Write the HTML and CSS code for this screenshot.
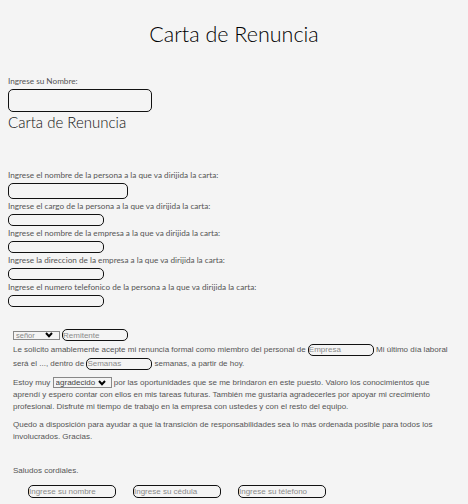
FILE: index.html
```html
<!DOCTYPE html>
<html lang="es">
<head>
<meta charset="utf-8">
<title>Carta de Renuncia</title>
<link rel="stylesheet" href="styles.css">
</head>
<body>
<h1 class="title">Carta de Renuncia</h1>
<div class="form">
  <label class="lbl">Ingrese su Nombre:</label>
  <input class="in in-name" type="text">
  <h2 class="sub">Carta de Renuncia</h2>
  <div class="fields">
    <label class="lbl">Ingrese el nombre de la persona a la que va dirijida la carta:</label>
    <input class="in in-wide" type="text">
    <label class="lbl">Ingrese el cargo de la persona a la que va dirijida la carta:</label>
    <input class="in in-mid" type="text">
    <label class="lbl">Ingrese el nombre de la empresa a la que va dirijida la carta:</label>
    <input class="in in-mid" type="text">
    <label class="lbl">Ingrese la direccion de la empresa a la que va dirijida la carta:</label>
    <input class="in in-mid" type="text">
    <label class="lbl">Ingrese el numero telefonico de la persona a la que va dirijida la carta:</label>
    <input class="in in-mid" type="text">
  </div>
</div>
<div class="letter">
  <div class="head"><span class="sel sel-sr"><select class="sel-in"><option>señor</option><option>señora</option></select><svg class="chev" width="8" height="6" viewBox="0 0 8 6"><polyline points="1,1 4,4.2 7,1" fill="none" stroke="#000" stroke-width="2"/></svg></span><input class="in in-sm" type="text" placeholder="Remitente"></div>
  <p class="txt first">Le solicito amablemente acepte mi renuncia formal como miembro del personal de <input class="in in-sm" type="text" placeholder="Empresa"> Mi último día laboral será el ..., dentro de <input class="in in-sm" type="text" placeholder="Semanas"> semanas, a partir de hoy.</p>
  <p class="txt">Estoy muy <span class="sel sel-ag"><select class="sel-in"><option>agradecido</option><option>agradecida</option></select><svg class="chev" width="8" height="6" viewBox="0 0 8 6"><polyline points="1,1 4,4.2 7,1" fill="none" stroke="#000" stroke-width="2"/></svg></span> por las oportunidades que se me brindaron en este puesto. Valoro los conocimientos que aprendí y espero contar con ellos en mis tareas futuras. También me gustaría agradecerles por apoyar mi crecimiento profesional. Disfruté mi tiempo de trabajo en la empresa con ustedes y con el resto del equipo.</p>
  <p class="txt">Quedo a disposición para ayudar a que la transición de responsabilidades sea lo más ordenada posible para todos los involucrados. Gracias.</p>
  <p class="txt salute">Saludos cordiales.</p>
  <div class="sign">
    <input class="in in-sig" type="text" placeholder="Ingrese su nombre">
    <input class="in in-sig" type="text" placeholder="Ingrese su cédula">
    <input class="in in-sig" type="text" placeholder="Ingrese su télefono">
  </div>
</div>
</body>
</html>
```
FILE: styles.css
```css
html, body {
  background: #f4f4f4;
}
body {
  margin: 8px;
  font-family: Lato, "Open Sans", sans-serif;
  color: #111;
}
.title {
  margin: 13px 0 0;
  font-size: 21.5px;
  line-height: 26px;
  font-weight: 300;
  text-align: center;
  color: #000;
}
.form {
  display: flex;
  flex-direction: column;
  align-items: flex-start;
  margin-top: 27px;
}
.lbl {
  display: block;
  padding-top: 2px;
  font-size: 8.2px;
  line-height: 11px;
  font-weight: 400;
  color: #555;
}
.form > .lbl {
  margin-bottom: 2px;
}
.in {
  box-sizing: border-box;
  margin: 0;
  padding: 0;
  border: 1px solid #111;
  border-radius: 5px;
  background: transparent;
  font-family: "Liberation Sans", Arial, sans-serif;
  font-size: 8px;
  color: #333;
  outline: none;
}
.in::placeholder {
  color: #8a8a8a;
}
.in-name {
  width: 144px;
  height: 23px;
}
.sub {
  margin: 0;
  font-size: 15px;
  line-height: 20px;
  font-weight: 300;
  color: #111;
}
.fields {
  display: flex;
  flex-direction: column;
  align-items: flex-start;
  margin-top: 36px;
}
.fields .in {
  margin-top: 2px;
}
.in-wide {
  width: 120px;
  height: 16px;
}
.in-mid {
  width: 96px;
  height: 12px;
}
.letter {
  padding: 21px 5px 0;
  font-family: "Liberation Sans", Arial, sans-serif;
  font-size: 8px;
  line-height: 12px;
  color: #555;
}
.head {
  display: flex;
  align-items: center;
  gap: 2px;
  height: 14px;
}
.sel {
  box-sizing: border-box;
  display: inline-flex;
  align-items: center;
  border: 1px solid #888;
  background: transparent;
}
.sel-in {
  appearance: none;
  -webkit-appearance: none;
  flex: 1;
  min-width: 0;
  margin: 0;
  padding: 0 0 0 2px;
  border: 0;
  background: transparent;
  font-family: "Liberation Sans", Arial, sans-serif;
  outline: none;
}
.chev {
  flex: none;
  display: block;
}
.sel-sr {
  width: 47px;
  height: 9px;
}
.sel-sr .sel-in {
  font-size: 7.5px;
  line-height: 7px;
  color: #888;
}
.sel-sr .chev {
  margin-right: 6px;
}
.sel-ag {
  width: 59px;
  height: 11px;
  vertical-align: middle;
}
.sel-ag .sel-in {
  font-size: 8px;
  line-height: 9px;
  color: #444;
}
.sel-ag .chev {
  margin-right: 5px;
}
.in-sm {
  width: 66px;
  height: 12px;
  vertical-align: middle;
}
.txt {
  margin: 0 0 6px;
}
.txt.first {
  margin-top: 1px;
  line-height: 14px;
}
.salute {
  margin-top: 22px;
  margin-bottom: 8px;
}
.sign {
  display: flex;
  gap: 17px;
  padding-left: 15px;
}
.in-sig {
  width: 88px;
  height: 13px;
}
```
